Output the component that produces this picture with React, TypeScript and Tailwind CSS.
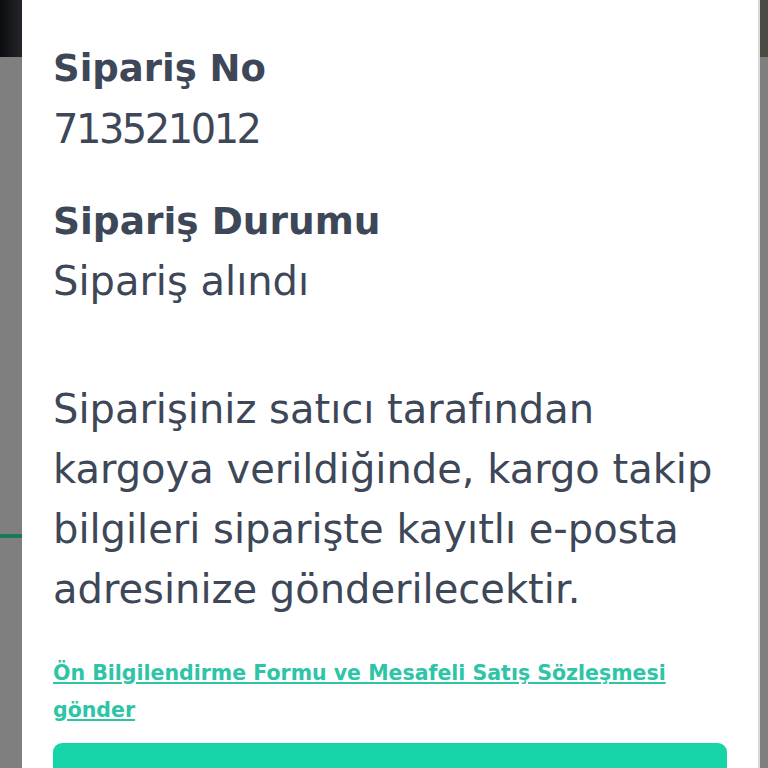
const textColor = "text-[#3d4757]";

function SideStrip({ side }: { side: "left" | "right" }) {
  const isLeft = side === "left";
  return (
    <div
      className={
        isLeft
          ? "flex w-[22px] shrink-0 flex-col"
          : "flex w-[10px] shrink-0 flex-col border-l-2 border-[#d9d9d9]"
      }
    >
      <div
        className={
          isLeft
            ? "h-[57px] bg-gradient-to-r from-[#0c0d0f] to-[#25262a]"
            : "h-[57px] bg-[#4a4c44]"
        }
      />
      <div className="flex-1 bg-[#7f7f7f]">
        {isLeft && <div className="mt-[477px] h-[4px] bg-[#1b7a5e]" />}
      </div>
    </div>
  );
}

export default function App() {
  return (
    <div
      className="flex h-screen overflow-hidden bg-[#7f7f7f]"
      style={{ fontFamily: '"DejaVu Sans", sans-serif' }}
    >
      <SideStrip side="left" />
      <div className="flex w-[736px] shrink-0 flex-col bg-white px-[31px] pt-[39px]">
        <h2 className={`text-[37px] font-bold leading-[60px] ${textColor}`}>
          Sipariş No
        </h2>
        <p className={`text-[40px] leading-[61px] tracking-[-2.5px] ${textColor}`}>
          713521012
        </p>

        <h2 className={`mt-[31px] text-[37.5px] font-bold leading-[60px] ${textColor}`}>
          Sipariş Durumu
        </h2>
        <p className={`text-[40px] leading-[61px] ${textColor}`}>Sipariş alındı</p>

        <p className={`mt-[67px] whitespace-nowrap text-[40px] leading-[60px] ${textColor}`}>
          Siparişiniz satıcı tarafından
          <br />
          kargoya verildiğinde, kargo takip
          <br />
          bilgileri siparişte kayıtlı e-posta
          <br />
          adresinize gönderilecektir.
        </p>

        <a
          href="#"
          className="mt-[36px] text-[20.5px] font-bold leading-[37px] text-[#2ec4a6] underline underline-offset-2"
        >
          Ön Bilgilendirme Formu ve Mesafeli Satış Sözleşmesi
          <br />
          gönder
        </a>

        <button className="mt-[14px] h-[56px] w-full shrink-0 rounded-[9px] bg-[#17d4a8]" />
      </div>
      <SideStrip side="right" />
    </div>
  );
}
